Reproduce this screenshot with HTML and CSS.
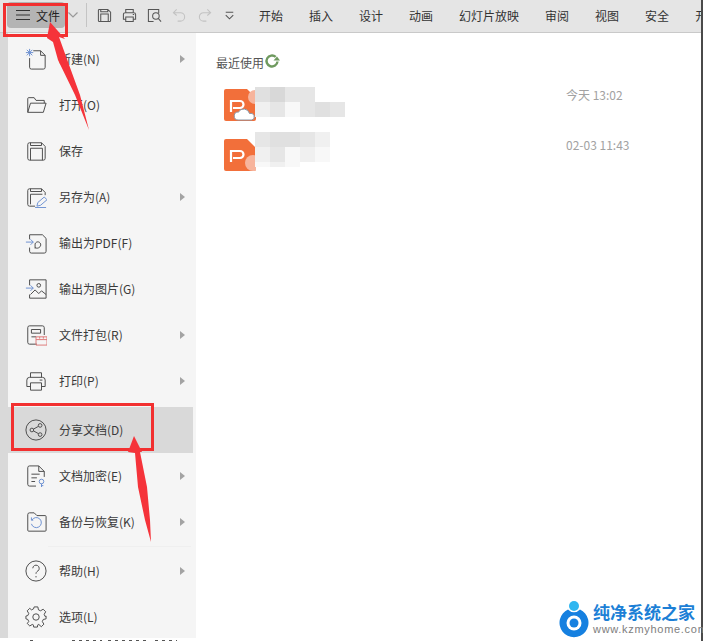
FILE: index.html
```html
<!DOCTYPE html>
<html lang="zh-CN">
<head>
<meta charset="utf-8">
<title>文件菜单</title>
<link rel="stylesheet" href="styles.css">
</head>
<body>
<div class="app">
  <header class="toolbar">
    <div class="file-btn">
      <svg class="burger" viewBox="0 0 14 12"><path d="M0 1.5h14M0 6h14M0 10.500h14"/></svg>
      <span>文件</span>
    </div>
    <svg class="chev" viewBox="0 0 10 6"><path d="M.5.5 5 5 9.500.5"/></svg>
    <div class="divider"></div>
    <div class="quick">
      <svg viewBox="0 0 16 16"><path d="M1.500 2.500a1 1 0 0 1 1-1h9l3 3v9a1 1 0 0 1-1 1h-11a1 1 0 0 1-1-1zM4 14.500v-8h8v8M4 1.500v2.500h7.500V1.500"/></svg>
      <svg viewBox="0 0 16 16"><path d="M4 5V1.500h8V5M4 12H1.500V7a2 2 0 0 1 2-2h9a2 2 0 0 1 2 2v5H12M4 9.500h8v5H4zM11.500 7h1.500"/></svg>
      <svg viewBox="0 0 16 16"><path d="M7 14.500H1.500v-13h11v4"/><circle cx="9.500" cy="8.500" r="3.500"/><path d="m12 11 3 3.500"/></svg>
      <svg class="dim" viewBox="0 0 16 16"><path d="M5 1.500 1.500 5 5 8M2 5h7a4.500 4.500 0 0 1 0 9H6"/></svg>
      <svg class="dim" viewBox="0 0 16 16"><path d="M11 1.500 14.500 5 11 8M14 5H7a4.500 4.500 0 0 0 0 9h3"/></svg>
      <svg class="more" viewBox="0 0 16 16"><path d="M4 4.500h8M4 7.500l4 4 4-4"/></svg>
    </div>
    <nav class="tabs">
      <span>开始</span><span>插入</span><span>设计</span><span>动画</span><span>幻灯片放映</span><span>审阅</span><span>视图</span><span>安全</span><span>开发工具</span>
    </nav>
  </header>

  <div class="body">
    <div class="rail"></div>
    <aside class="menu">
      <div class="group">
        <div class="item"><svg class="ico" viewBox="0 0 24 24"><path d="M9 3h8l5 5v13a2 2 0 0 1-2 2H7a2 2 0 0 1-2-2V11M17 3v5h5"/><path class="blue" d="M5 1v8M1 5h8M2 2l6 6M8 2 2 8"/></svg><span>新建(N)</span><i class="tri"></i></div>
        <div class="item"><svg class="ico" viewBox="0 0 24 24"><path d="M3 20V5a1 1 0 0 1 1-1h6l2 3h9v3M3 20l3-10h17l-3 10z"/></svg><span>打开(O)</span></div>
        <div class="item"><svg class="ico" viewBox="0 0 24 24"><path d="M3 5a2 2 0 0 1 2-2h13l4 4v13a2 2 0 0 1-2 2H5a2 2 0 0 1-2-2zM6 22V9h13v13M6 3v3h12V3"/></svg><span>保存</span></div>
        <div class="item"><svg class="ico" viewBox="0 0 24 24"><path d="M11 22H5a2 2 0 0 1-2-2V5a2 2 0 0 1 2-2h13l4 4v3M6 20V9h13M6 3v3h12V3"/><path class="blue" d="m13 22 1-4 7-6 3 3-7 6zM11 23.500h12"/></svg><span>另存为(A)</span><i class="tri"></i></div>
        <div class="item"><svg class="ico" viewBox="0 0 24 24"><path d="M5 8V3h14l4 4v14a2 2 0 0 1-2 2H7a2 2 0 0 1-2-2v-4M11 17c3 2 7-1 6-4s-5-3-6 0v5"/><path class="blue" d="M1 11h8M6 8l3 3-3 3"/></svg><span>输出为PDF(F)</span></div>
        <div class="item"><svg class="ico" viewBox="0 0 24 24"><path d="M5 8V2h18v20H5v-4M6 18l5-5 4 4 3-3 5 4"/><circle cx="15" cy="8" r="2"/><path class="blue" d="M1 11h8M6 8l3 3-3 3"/></svg><span>输出为图片(G)</span></div>
        <div class="item"><svg class="ico" viewBox="0 0 24 24"><path d="M13 22H5a2 2 0 0 1-2-2V4a2 2 0 0 1 2-2h14a2 2 0 0 1 2 2v8M7 6h10v4H7zM7 14h5"/><path class="red" d="M12 14h12v9H12zM12 17h12M16 14v2M20 14v2"/></svg><span>文件打包(R)</span><i class="tri"></i></div>
        <div class="item"><svg class="ico" viewBox="0 0 24 24"><path d="M6 8V3h12v5M6 18H2V11a3 3 0 0 1 3-3h14a3 3 0 0 1 3 3v7h-4M6 14h12v8H6zM16 11h3"/></svg><span>打印(P)</span><i class="tri"></i></div>
      </div>
      <div class="group gap">
        <div class="item active"><svg class="ico" viewBox="0 0 24 24"><circle cx="12" cy="12" r="11"/><circle cx="16.500" cy="7" r="2"/><circle cx="16.500" cy="17" r="2"/><circle cx="7.500" cy="12" r="2"/><path d="m9.300 11 5.400-3M9.300 13l5.400 3"/></svg><span>分享文档(D)</span></div>
        <div class="item"><svg class="ico" viewBox="0 0 24 24"><path d="M12 23H5a2 2 0 0 1-2-2V3a2 2 0 0 1 2-2h10l6 6v6M15 1v6h6M7 10h9M7 14h6M7 18h4"/><circle class="blue" cx="18" cy="18" r="2.500"/><path class="blue" d="M18 20.500V24M18 22.500h2"/></svg><span>文档加密(E)</span><i class="tri"></i></div>
        <div class="item"><svg class="ico" viewBox="0 0 24 24"><path d="M3 4a2 2 0 0 1 2-2h5l3 3h9a1 1 0 0 1 1 1v15a1 1 0 0 1-1 1H4a1 1 0 0 1-1-1z"/><path class="blue" d="M9 10H7v-3M7.500 10a5.500 5.500 0 1 1-.5 4"/></svg><span>备份与恢复(K)</span><i class="tri"></i></div>
      </div>
      <div class="group sep">
        <div class="item"><svg class="ico" viewBox="0 0 24 24"><circle cx="12" cy="12" r="11"/><path d="M8.500 9a3.500 3.500 0 1 1 5.500 3c-1.300.9-2 1.500-2 3"/><path d="M12 17.500v1.500"/></svg><span>帮助(H)</span><i class="tri"></i></div>
        <div class="item"><svg class="ico" viewBox="0 0 24 24"><circle cx="12" cy="12" r="3.500"/><path d="M10 1h4l.7 3.200 2.300 1 2.800-1.700 2.800 2.800-1.700 2.800 1 2.300L23 11v3l-3.100.7-1 2.300 1.700 2.800-2.800 2.800L15 20.100l-1 .4-.5 2.500h-4l-.5-2.500-1-.4-2.800 1.700-2.800-2.800L4.100 17l-1-2.300L1 14v-3l2.100-.6 1-2.300-1.700-2.800 2.800-2.800L7 4.200l2.300-1z"/></svg><span>选项(L)</span></div>
      </div>
    </aside>

    <main class="content">
      <h2 class="recent">最近使用<svg class="refresh" viewBox="0 0 16 16"><path d="M13.500 8.500a5.500 5.500 0 1 1-1.800-4.600"/><path class="fill" d="M9.500 7.500h6.500L13 3.500z"/></svg></h2>
      <div class="file">
        <div class="ppt">
          <svg viewBox="0 0 32 32"><path class="sheet" d="M2 0h21l9 9v21a2 2 0 0 1-2 2H2a2 2 0 0 1-2-2V2a2 2 0 0 1 2-2z"/><circle class="fold" cx="31" cy="8" r="7"/><path class="p" d="M7 23V12h9a3.500 3.500 0 0 1 0 7H9"/><path class="cloud" d="M14 31a4 4 0 0 1 .5-8 6 6 0 0 1 11 1.500A3.300 3.300 0 0 1 28 31z"/></svg>
        </div>
        <div class="mosaic">
          <div class="line"><b class="s3"></b><b class="s4"></b><b class="s2"></b><b class="s2"></b></div>
          <div class="line"><b class="s5"></b><b class="s2"></b><b class="s6"></b><b class="s2"></b><b class="s3"></b><b class="s2"></b></div>
        </div>
        <time>今天 13:02</time>
      </div>
      <div class="file second">
        <div class="ppt">
          <svg viewBox="0 0 32 32"><path class="sheet" d="M2 0h21l9 9v21a2 2 0 0 1-2 2H2a2 2 0 0 1-2-2V2a2 2 0 0 1 2-2z"/><circle class="fold" cx="29" cy="24" r="8"/><path class="p" d="M7 23V12h9a3.500 3.500 0 0 1 0 7H9"/></svg>
        </div>
        <div class="mosaic">
          <div class="line"><b class="s2"></b><b class="s3"></b><b class="s3"></b><b class="s2"></b><b class="s5"></b></div>
          <div class="line"><b class="s5"></b><b class="s2"></b><b class="s6"></b><b class="s5"></b><b class="s6"></b></div>
          <div class="line short"><b class="s6"></b><b class="s5"></b><b class="s6"></b></div>
        </div>
        <time>02-03 11:43</time>
      </div>
    </main>
  </div>
  <div class="cutoff"><u class="m1"></u><u class="m2"></u><u class="m3"></u><u class="m4"></u></div>
</div>

<div class="mark mark-file"></div>
<div class="mark mark-share"></div>
<svg class="arrows" viewBox="0 0 703 641">
  <polygon points="50,22 65,39 59,37 68,62 80,95 89,130 75,95 58,60 53,42 47,38"/>
  <polygon points="134,436 142,452 140,452 147,487 150,520 151,542 145,520 138,487 135,453 128,452"/>
</svg>

<div class="brand">
  <svg class="brand-logo" viewBox="0 0 34 38"><circle class="b1" cx="17" cy="6" r="5"/><path class="b2" d="M11 9.500a14.500 14.500 0 1 0 12 0 8 8 0 0 1-12 0z"/><circle class="b3" cx="17" cy="23" r="7.500"/><circle class="b2" cx="17" cy="23" r="4.500"/></svg>
  <div class="brand-text">
    <strong>纯净系统之家</strong>
    <small>www.kzmyhome.com</small>
  </div>
</div>
</body>
</html>
```

FILE: styles.css
```css
* { box-sizing: border-box; }
html, body { margin: 0; height: 100%; }
body {
  position: relative;
  width: 703px;
  height: 641px;
  overflow: hidden;
  background: #fff;
  color: #3a3a3a;
  font: 12px "Noto Sans CJK SC", "Liberation Sans", sans-serif;
}
.app {
  display: flex;
  flex-direction: column;
  height: 641px;
  border-right: 2px solid #4a4a4a;
}

/* toolbar */
.toolbar {
  flex: none;
  display: flex;
  align-items: center;
  height: 33px;
  padding: 0 0 2px 7px;
  background: #e5e5e5;
  border-bottom: 1px solid #c9c9c9;
  overflow: hidden;
}
.file-btn {
  flex: none;
  display: flex;
  align-items: center;
  gap: 6px;
  width: 58px;
  height: 26px;
  padding-left: 9px;
  background: #b4b4b4;
  border-radius: 4px;
  color: #222;
}
.burger { width: 14px; height: 12px; fill: none; stroke: #333; stroke-width: 1.200; }
.chev { flex: none; width: 10px; height: 6px; margin-left: 3px; fill: none; stroke: #999; stroke-width: 1.200; }
.divider { flex: none; width: 1px; height: 24px; margin-left: 8px; background: #c4c4c4; }
.quick { flex: none; display: flex; gap: 10px; margin-left: 10px; width: 150px; }
.quick svg { flex: none; width: 15px; height: 15px; fill: none; stroke: #555; stroke-width: 1.100; }
.quick .dim { stroke: #c2c2c2; }
.tabs { flex: none; display: flex; gap: 26px; margin-left: 12px; white-space: nowrap; color: #333; }

/* body */
.body { flex: 1; display: flex; min-height: 0; }
.rail { flex: none; width: 8px; background: #d9d9d9; }
.menu {
  flex: none;
  width: 188px;
  height: 605px;
  padding-top: 3px;
  overflow: hidden;
  background: #f5f5f5;
}
.group.gap { margin-top: 3px; }
.group.sep { margin-top: 3px; position: relative; }
.group.sep::before {
  content: "";
  position: absolute;
  top: -2px;
  left: 40px;
  right: 5px;
  height: 1px;
  background: #efefef;
}
.item {
  display: flex;
  align-items: center;
  height: 46px;
  padding-left: 17px;
  margin-right: 3px;
  position: relative;
}
.item span { margin: -2px 0 0 12px; }
.item.active { background: #d9d9d9; }
.ico { flex: none; width: 22px; height: 22px; fill: none; stroke: #4a4a4a; stroke-width: 1.050; }
.ico .blue { stroke: #6a8fd0; }
.ico .red { stroke: #dd7777; }
.tri {
  position: absolute;
  left: 172px;
  top: 19px;
  border-left: 5px solid #a3a3a3;
  border-top: 4px solid transparent;
  border-bottom: 4px solid transparent;
}

/* content */
.content { flex: 1; padding: 20px 0 0 20px; min-width: 0; }
.recent {
  display: flex;
  align-items: center;
  margin: 0;
  height: 18px;
  font-size: 12px;
  font-weight: 400;
  color: #555;
}
.refresh { width: 16px; height: 16px; margin-top: -2px; fill: none; stroke: #6f9a5f; stroke-width: 2.400; }
.refresh .fill { fill: #6f9a5f; stroke: none; }
.file {
  display: grid;
  grid-template-columns: 32px 310px auto;
  align-items: start;
  height: 50px;
  margin-left: 8px;
}
.file:first-of-type { margin-top: 17px; }
.ppt { margin-top: 1px; }
.ppt svg { display: block; width: 32px; height: 32px; }
.sheet { fill: #f26f3a; }
.fold { fill: #f7b49c; }
.p { fill: none; stroke: #fff; stroke-width: 2.200; }
.cloud { fill: #fff; stroke: #8a97a6; stroke-width: 1; }
.mosaic { margin: -1px 0 0 -1px; }
.second .mosaic { margin-top: -6px; }
.line { display: flex; height: 15px; }
.line.short { height: 5px; }
.line b { width: 15px; height: 100%; }
.s2 { background: #e6e6e6; }
.s3 { background: #e0e0e0; }
.s4 { background: #d8d8d8; }
.s5 { background: #f0f0f0; }
.s6 { background: #f8f8f8; }
time { margin-top: -1px; color: #a2a2a2; line-height: 16px; white-space: nowrap; }

/* clipped row below the window */
.cutoff { flex: none; position: relative; height: 3px; background: #fff; overflow: hidden; }
.cutoff u { position: absolute; bottom: 0; height: 1px; background: repeating-linear-gradient(90deg, #555 0 3px, transparent 3px 7px); }
.m1 { left: 30px; width: 3px; }
.m2 { left: 72px; width: 30px; }
.m3 { left: 108px; width: 40px; }
.m4 { left: 155px; width: 22px; }

/* annotations over the screenshot */
.mark { position: absolute; border: 3px solid #f23030; }
.mark-file { left: 3px; top: 3px; width: 65px; height: 34px; }
.mark-share { left: 11px; top: 403px; width: 143px; height: 48px; }
.arrows { position: absolute; inset: 0; width: 703px; height: 641px; pointer-events: none; }
.arrows polygon { fill: #f5333a; }

/* watermark */
.brand {
  position: absolute;
  right: 2px;
  bottom: 0;
  width: 146px;
  height: 43px;
  display: flex;
  gap: 2px;
  padding-left: 2px;
  background: #fff;
}
.brand-logo { flex: none; width: 34px; height: 38px; margin-top: 2px; }
.b1 { fill: #2fb6f0; }
.b2 { fill: #1580e0; }
.b3 { fill: #fff; }
.brand-text { display: flex; flex-direction: column; padding-top: 3px; }
.brand-text strong { font-size: 17px; line-height: 22px; color: #1c7fd6; font-weight: 700; white-space: nowrap; }
.brand-text small { font: 11px/13px "Liberation Sans", sans-serif; letter-spacing: .7px; color: #7d7d7d; white-space: nowrap; }
```
